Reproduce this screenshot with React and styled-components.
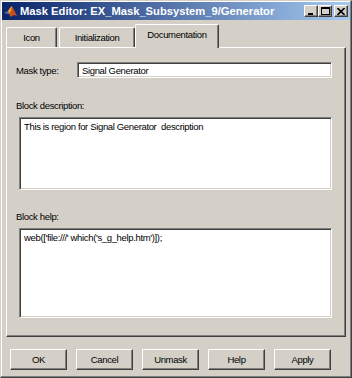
import React from 'react'
import styled, { createGlobalStyle } from 'styled-components'

const GlobalStyle = createGlobalStyle`
html, body {
  margin: 0;
  padding: 0;
  background: #d4d0c8;
}
`

const Window = styled.div`
width: 352px;
height: 378px;
box-sizing: border-box;
background: #d4d0c8;
border: 1px solid #d4d0c8;
border-right-color: #404040;
border-bottom-color: #404040;
box-shadow: inset -1px -1px 0 #808080, inset 1px 1px 0 #ffffff;
display: flex;
flex-direction: column;
font-family: "Liberation Sans", Arial, sans-serif;
font-size: 9.5px;
letter-spacing: -0.35px;
color: #000;
overflow: hidden;
`

const TitleBar = styled.div`
height: 18px;
margin: 1px 1px 0 1px;
background: linear-gradient(to right, #0a246a, #a6caf0);
display: flex;
align-items: center;
padding: 0 2px 0 2px;
flex-shrink: 0;
`

const TitleText = styled.span`
flex: 1;
color: #fff;
font-weight: bold;
font-family: "Liberation Sans", Arial, sans-serif;
font-size: 11.2px;
letter-spacing: 0;
margin-left: 3px;
white-space: nowrap;
`

const Controls = styled.div`
display: flex;
align-items: center;
`

const CtrlButton = styled.div`
width: 14px;
height: 12px;
box-sizing: border-box;
background: #d4d0c8;
border: 1px solid;
border-color: #ffffff #404040 #404040 #ffffff;
box-shadow: inset -1px -1px 0 #808080;
display: flex;
align-items: center;
justify-content: center;
margin-left: ${p => (p.$gap ? '2px' : '0')};
`

const Body = styled.div`
flex: 1;
display: flex;
flex-direction: column;
padding: 2px 5px 0 5px;
`

const TabRow = styled.div`
display: flex;
align-items: flex-end;
height: 25px;
`

const Tab = styled.div`
height: ${p => (p.$active ? '24px' : '20px')};
width: ${p => p.$w}px;
box-sizing: border-box;
background: #d4d0c8;
border: 1px solid;
border-color: #ffffff #404040 transparent #ffffff;
border-bottom: none;
box-shadow: inset -1px 0 0 #808080;
border-radius: 2px 2px 0 0;
display: flex;
align-items: center;
justify-content: center;
padding-bottom: ${p => (p.$active ? '4px' : '0')};
margin-left: ${p => p.$ml}px;
margin-bottom: ${p => (p.$active ? '-1px' : '0')};
position: relative;
z-index: ${p => (p.$active ? 2 : 1)};
`

const Panel = styled.div`
height: 290px;
box-sizing: border-box;
border: 1px solid;
border-color: #ffffff #404040 #404040 #ffffff;
box-shadow: inset -1px -1px 0 #808080;
padding: 14px 13px 0 9px;
display: flex;
flex-direction: column;
`

const TypeRow = styled.div`
display: flex;
align-items: center;
height: 16px;
`

const Label = styled.span`
white-space: nowrap;
`

const TypeLabel = styled(Label)`
width: 61px;
`

const Field = styled.div`
box-sizing: border-box;
background: #fff;
border: 1px solid;
border-color: #808080 #ffffff #ffffff #808080;
box-shadow: inset 1px 1px 0 #404040, inset -1px -1px 0 #d4d0c8;
padding: ${p => (p.$multi ? '3px 4px' : '0 4px')};
height: ${p => p.$h}px;
flex: ${p => (p.$multi ? 'none' : '1')};
display: flex;
align-items: ${p => (p.$multi ? 'flex-start' : 'center')};
margin-left: ${p => (p.$multi ? '3px' : '0')};
white-space: nowrap;
`

const SectionLabel = styled(Label)`
display: block;
margin-top: ${p => p.$top}px;
margin-bottom: 6px;
`

const ButtonRow = styled.div`
display: flex;
gap: 9px;
padding: 12px 0 0 4px;
`

const Button = styled.div`
width: 57px;
height: 21px;
box-sizing: border-box;
background: #d4d0c8;
border: 1px solid;
border-color: #ffffff #404040 #404040 #ffffff;
box-shadow: inset -1px -1px 0 #808080;
display: flex;
align-items: center;
justify-content: center;
`

function MatlabIcon() {
  return (
    <svg width="13" height="13" viewBox="0 0 13 13">
      <path d="M0 8 L4 6 L6 3 L8 1 L10 5 L13 11 L10 10 L7 12 L5 9 Z" fill="#c8501e" />
      <path d="M4 6 L6 3 L8 1 L7 6 L5 9 Z" fill="#f0a030" />
      <path d="M0 8 L4 6 L5 9 Z" fill="#3070c0" />
    </svg>
  )
}

export default function App() {
  return (
    <>
      <GlobalStyle />
      <Window>
        <TitleBar>
          <MatlabIcon />
          <TitleText>Mask Editor: EX_Mask_Subsystem_9/Generator</TitleText>
          <Controls>
            <CtrlButton>
              <svg width="8" height="7" viewBox="0 0 8 7"><rect x="1" y="5" width="5" height="2" fill="#000" /></svg>
            </CtrlButton>
            <CtrlButton>
              <svg width="9" height="8" viewBox="0 0 9 8"><rect x="0.5" y="0.5" width="8" height="7" fill="none" stroke="#000" /><rect x="0" y="0" width="9" height="2" fill="#000" /></svg>
            </CtrlButton>
            <CtrlButton $gap>
              <svg width="8" height="7" viewBox="0 0 8 7"><path d="M0.5 0 L7.5 7 M7.5 0 L0.5 7" stroke="#000" strokeWidth="1.6" /></svg>
            </CtrlButton>
          </Controls>
        </TitleBar>
        <Body>
          <TabRow>
            <Tab $w={51} $ml={0}>Icon</Tab>
            <Tab $w={76} $ml={2}>Initialization</Tab>
            <Tab $w={84} $ml={0} $active>Documentation</Tab>
          </TabRow>
          <Panel>
            <TypeRow>
              <TypeLabel>Mask type:</TypeLabel>
              <Field $h={16}>Signal Generator</Field>
            </TypeRow>
            <SectionLabel $top={22}>Block description:</SectionLabel>
            <Field $multi $h={73}>This is region for Signal Generator&nbsp; description</Field>
            <SectionLabel $top={21}>Block help:</SectionLabel>
            <Field $multi $h={90}>web(['file:///' which('s_g_help.htm')]);</Field>
          </Panel>
          <ButtonRow>
            <Button>OK</Button>
            <Button>Cancel</Button>
            <Button>Unmask</Button>
            <Button>Help</Button>
            <Button>Apply</Button>
          </ButtonRow>
        </Body>
      </Window>
    </>
  )
}
